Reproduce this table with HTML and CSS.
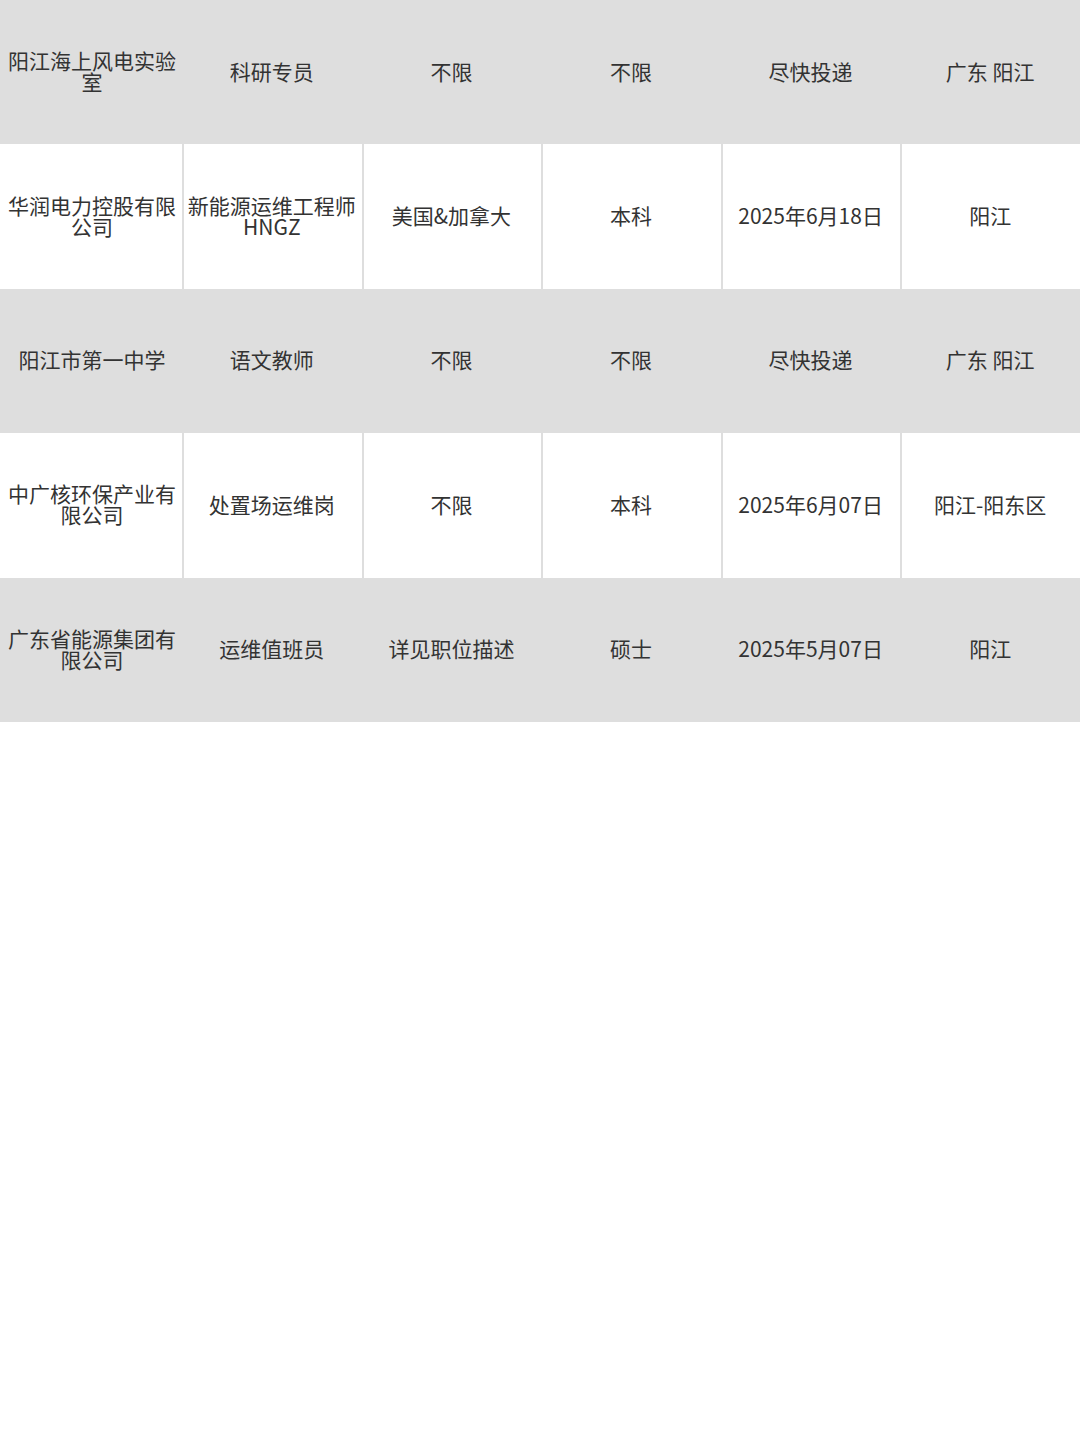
FILE: index.html
```html
<!DOCTYPE html>
<html lang="zh-CN">
<head>
<meta charset="utf-8">
<title>招聘信息</title>
<link rel="stylesheet" href="styles.css">
</head>
<body>
<div class="table">
  <div class="row gray">
    <div class="cell">阳江海上风电实验室</div>
    <div class="cell">科研专员</div>
    <div class="cell">不限</div>
    <div class="cell">不限</div>
    <div class="cell">尽快投递</div>
    <div class="cell">广东 阳江</div>
  </div>
  <div class="row white">
    <div class="cell">华润电力控股有限公司</div>
    <div class="cell">新能源运维工程师HNGZ</div>
    <div class="cell">美国&amp;加拿大</div>
    <div class="cell">本科</div>
    <div class="cell">2025年6月18日</div>
    <div class="cell">阳江</div>
  </div>
  <div class="row gray">
    <div class="cell">阳江市第一中学</div>
    <div class="cell">语文教师</div>
    <div class="cell">不限</div>
    <div class="cell">不限</div>
    <div class="cell">尽快投递</div>
    <div class="cell">广东 阳江</div>
  </div>
  <div class="row white">
    <div class="cell">中广核环保产业有限公司</div>
    <div class="cell">处置场运维岗</div>
    <div class="cell">不限</div>
    <div class="cell">本科</div>
    <div class="cell">2025年6月07日</div>
    <div class="cell">阳江-阳东区</div>
  </div>
  <div class="row gray">
    <div class="cell">广东省能源集团有限公司</div>
    <div class="cell">运维值班员</div>
    <div class="cell">详见职位描述</div>
    <div class="cell">硕士</div>
    <div class="cell">2025年5月07日</div>
    <div class="cell">阳江</div>
  </div>
</div>
</body>
</html>
```

FILE: styles.css
```css
html, body {
  margin: 0;
  padding: 0;
  background: #ffffff;
}

body {
  width: 1080px;
  font-family: "Noto Sans CJK SC", "Noto Sans", sans-serif;
  color: #333333;
}

.table {
  display: flex;
  flex-direction: column;
}

.row {
  display: grid;
  grid-template-columns: 182px repeat(5, 1fr);
  column-gap: 2px;
  height: 144.4px;
  background: #dedede;
}

.cell {
  display: flex;
  align-items: center;
  justify-content: center;
  text-align: center;
  padding: 0 4px 2px 2px;
  font-size: 21px;
  line-height: 21px;
  word-break: break-all;
}

.cell:first-child {
  padding: 0 2px 2px 4px;
}

.row.white .cell {
  background: #ffffff;
}
```
